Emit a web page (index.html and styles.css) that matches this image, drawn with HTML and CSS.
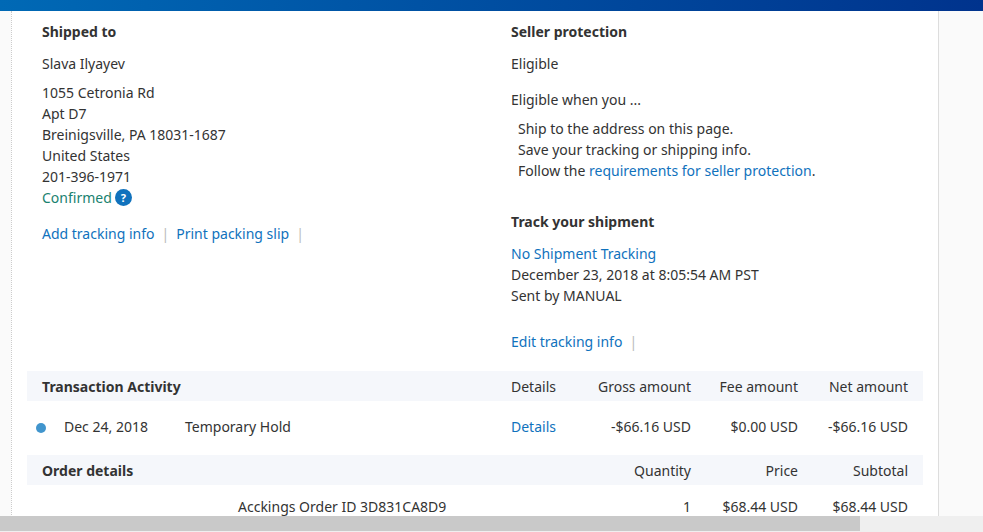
FILE: index.html
```html
<!DOCTYPE html>
<html lang="en">
<head>
    <meta charset="UTF-8">
    <meta name="viewport" content="width=device-width, initial-scale=1.0">
    <title>Transaction details</title>
    <link rel="stylesheet" href="styles.css">
</head>
<body>
    <header class="top-bar"></header>

    <main class="page">
        <div class="sheet">
            <div class="columns">
                <section class="shipping">
                    <h2>Shipped to</h2>
                    <p class="name">Slava Ilyayev</p>
                    <address>
                        1055 Cetronia Rd<br>
                        Apt D7<br>
                        Breinigsville, PA 18031-1687<br>
                        United States<br>
                        201-396-1971
                    </address>
                    <p class="confirmed">
                        Confirmed
                        <button class="help" type="button">?</button>
                    </p>
                    <p class="actions">
                        <a href="#">Add tracking info</a>
                        <span class="divider">|</span>
                        <a href="#">Print packing slip</a>
                        <span class="divider">|</span>
                    </p>
                </section>

                <section class="protection">
                    <h2>Seller protection</h2>
                    <p>Eligible</p>
                    <p class="when">Eligible when you ...</p>
                    <ul>
                        <li>Ship to the address on this page.</li>
                        <li>Save your tracking or shipping info.</li>
                        <li>Follow the <a href="#">requirements for seller protection</a>.</li>
                    </ul>

                    <h2 class="track-title">Track your shipment</h2>
                    <p><a href="#">No Shipment Tracking</a></p>
                    <p>December 23, 2018 at 8:05:54 AM PST</p>
                    <p>Sent by MANUAL</p>
                    <p class="actions edit">
                        <a href="#">Edit tracking info</a>
                        <span class="divider">|</span>
                    </p>
                </section>
            </div>

            <table class="activity">
                <colgroup>
                    <col class="col-date">
                    <col>
                    <col class="col-details">
                    <col class="col-gross">
                    <col class="col-fee">
                    <col class="col-net">
                </colgroup>
                <thead>
                    <tr>
                        <th class="title" colspan="2">Transaction Activity</th>
                        <th>Details</th>
                        <th class="num">Gross amount</th>
                        <th class="num">Fee amount</th>
                        <th class="num">Net amount</th>
                    </tr>
                </thead>
                <tbody>
                    <tr>
                        <td class="date"><span class="dot"></span>Dec 24, 2018</td>
                        <td>Temporary Hold</td>
                        <td><a href="#">Details</a></td>
                        <td class="num">-$66.16 USD</td>
                        <td class="num">$0.00 USD</td>
                        <td class="num">-$66.16 USD</td>
                    </tr>
                </tbody>
            </table>

            <table class="order">
                <colgroup>
                    <col class="col-item">
                    <col>
                    <col class="col-gross">
                    <col class="col-fee">
                    <col class="col-net">
                </colgroup>
                <thead>
                    <tr>
                        <th class="title" colspan="2">Order details</th>
                        <th class="num">Quantity</th>
                        <th class="num">Price</th>
                        <th class="num">Subtotal</th>
                    </tr>
                </thead>
                <tbody>
                    <tr>
                        <td></td>
                        <td>Acckings Order ID 3D831CA8D9</td>
                        <td class="num">1</td>
                        <td class="num">$68.44 USD</td>
                        <td class="num">$68.44 USD</td>
                    </tr>
                </tbody>
            </table>
        </div>
    </main>

    <div class="scrollbar"><div class="thumb"></div></div>
</body>
</html>
```

FILE: styles.css
```css
* {
    margin: 0;
    padding: 0;
    box-sizing: border-box;
}

body {
    height: 100vh;
    display: flex;
    flex-direction: column;
    overflow: hidden;
    font-family: 'Noto Sans', sans-serif;
    font-size: 14px;
    line-height: 21px;
    color: #333;
    background: #fafafa;
}

a {
    color: #1072bd;
    text-decoration: none;
}

h2 {
    font-size: 14px;
    font-weight: 700;
    line-height: 21px;
    margin-bottom: 11px;
}

.top-bar {
    flex: none;
    height: 11px;
    background: linear-gradient(90deg, #0069b5, #00338d);
}

.page {
    flex: 1;
    min-height: 0;
    overflow: hidden;
    padding: 0 44px 0 11px;
}

.sheet {
    min-height: 100%;
    padding: 10px 15px 0;
    background: #fff;
    border-left: 1px dotted #ccc;
    border-right: 1px solid #ddd;
}

.columns {
    display: grid;
    grid-template-columns: 469px 1fr;
    padding: 0 15px 19px;
}

.name {
    margin-bottom: 8px;
}

address {
    font-style: normal;
}

.confirmed {
    display: flex;
    align-items: center;
    gap: 3px;
    color: #1a8270;
}

.help {
    width: 17px;
    height: 17px;
    border: none;
    border-radius: 50%;
    background: #1072bd;
    color: #fff;
    font-family: inherit;
    font-size: 11px;
    font-weight: 700;
    line-height: 17px;
    cursor: pointer;
}

.actions {
    display: flex;
    gap: 7px;
    margin-top: 15px;
}

.divider {
    color: #bbb;
}

.when {
    margin: 15px 0 8px;
}

.protection ul {
    list-style: none;
    padding-left: 7px;
}

.track-title {
    margin-top: 30px;
}

.edit {
    margin-top: 25px;
}

table {
    width: 100%;
    table-layout: fixed;
    border-collapse: collapse;
}

th {
    height: 30px;
    padding: 0 15px;
    font-weight: 400;
    text-align: left;
    white-space: nowrap;
    background: #f5f7fb;
}

td {
    padding: 0 15px;
    white-space: nowrap;
}

th.title {
    font-weight: 700;
}

.num {
    text-align: right;
}

/* long amounts may run into the left padding of their cell */
th.num,
td.num {
    padding-left: 0;
}

.activity td {
    height: 54px;
    padding-bottom: 4px;
}

.activity .date {
    padding-left: 9px;
}

.order td {
    height: 42px;
}

.dot {
    display: inline-block;
    width: 10px;
    height: 10px;
    margin-right: 18px;
    border-radius: 50%;
    background: #4195cd;
    vertical-align: -1px;
}

.col-date {
    width: 143px;
}

.col-item {
    width: 196px;
}

.col-details {
    width: 80px;
}

.col-gross {
    width: 130px;
}

.col-fee {
    width: 107px;
}

.col-net {
    width: 110px;
}

.scrollbar {
    flex: none;
    height: 16px;
    background: #efefef;
}

.thumb {
    width: 87.5%;
    height: 15px;
    background: #c9c9c9;
}
```
